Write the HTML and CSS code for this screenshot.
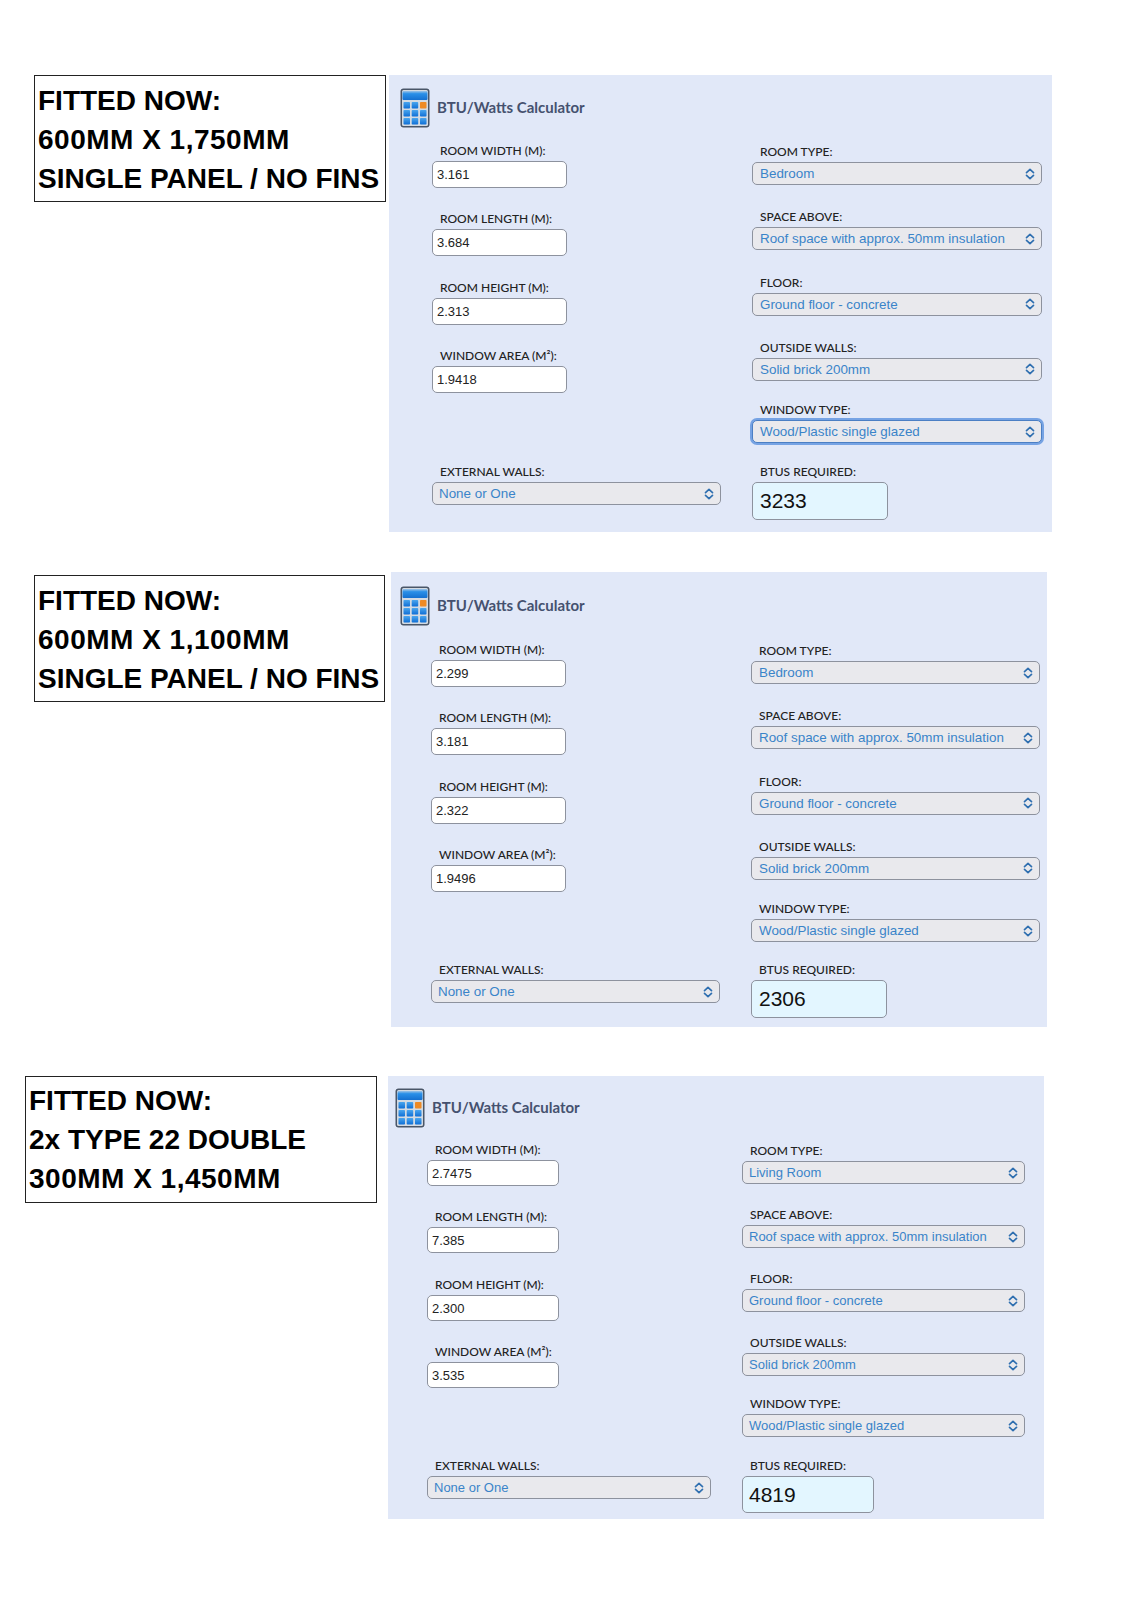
FILE: index.html
```html
<!DOCTYPE html>
<html lang="en">
  <head>
    <meta charset="UTF-8" />
    <meta name="viewport" content="width=device-width, initial-scale=1.0" />
    <title>BTU/Watts Calculator</title>
    <link rel="stylesheet" href="styles.css">
  </head>
  <body>
    <svg class="defs" width="0" height="0">
      <defs>
        <linearGradient id="calc-key" x1="0" y1="0" x2="0" y2="1">
          <stop offset="0" stop-color="#4aa6ee" />
          <stop offset="1" stop-color="#0f6fd6" />
        </linearGradient>
        <linearGradient id="calc-screen" x1="0" y1="0" x2="0" y2="1">
          <stop offset="0" stop-color="#9fc4e6" />
          <stop offset="0.3" stop-color="#2a90e8" />
          <stop offset="1" stop-color="#1570d0" />
        </linearGradient>
        <symbol id="calc" viewBox="0 0 30 40">
          <rect x="0.5" y="0.5" width="29" height="39" rx="3" fill="#4a5668" />
          <rect x="2" y="2" width="26" height="36" rx="1.5" fill="#d3dae2" />
          <rect x="2.5" y="3" width="25" height="9" rx="1" fill="url(#calc-screen)" />
          <rect x="3.5" y="14" width="6.5" height="6.5" rx="0.8" fill="url(#calc-key)" />
          <rect x="11.7" y="14" width="6.5" height="6.5" rx="0.8" fill="url(#calc-key)" />
          <rect x="20" y="14" width="6.5" height="6.5" rx="0.8" fill="#ee8a24" />
          <rect x="3.5" y="22" width="6.5" height="6.5" rx="0.8" fill="url(#calc-key)" />
          <rect x="11.7" y="22" width="6.5" height="6.5" rx="0.8" fill="url(#calc-key)" />
          <rect x="20" y="22" width="6.5" height="6.5" rx="0.8" fill="url(#calc-key)" />
          <rect x="3.5" y="30" width="6.5" height="6.5" rx="0.8" fill="url(#calc-key)" />
          <rect x="11.7" y="30" width="6.5" height="6.5" rx="0.8" fill="url(#calc-key)" />
          <rect x="20" y="30" width="6.5" height="6.5" rx="0.8" fill="url(#calc-key)" />
        </symbol>
        <symbol id="updown" viewBox="0 0 10 12">
          <path d="M1.5 4.6 5 1.4l3.5 3.2M1.5 7.4 5 10.6l3.5-3.2" fill="none" stroke="#2f6fb0" stroke-width="1.7" stroke-linecap="round" stroke-linejoin="round" />
        </symbol>
      </defs>
    </svg>

    <!-- Radiator 1 -->
    <section class="row row-one">
      <div class="note">FITTED NOW:<br><span class="wide">600MM X 1,750MM</span><br>SINGLE PANEL / NO FINS</div>
      <div class="panel">
        <header class="panel-head">
          <svg class="calc-icon"><use href="#calc" /></svg>
          <h2>BTU/Watts Calculator</h2>
        </header>
        <div class="form">
          <div class="col col-inputs">
            <div class="field"><label>ROOM WIDTH (M):</label><div class="input">3.161</div></div>
            <div class="field"><label>ROOM LENGTH (M):</label><div class="input">3.684</div></div>
            <div class="field"><label>ROOM HEIGHT (M):</label><div class="input">2.313</div></div>
            <div class="field"><label>WINDOW AREA (M²):</label><div class="input">1.9418</div></div>
          </div>
          <div class="col col-selects">
            <div class="field"><label>ROOM TYPE:</label><div class="select">Bedroom<svg><use href="#updown" /></svg></div></div>
            <div class="field"><label>SPACE ABOVE:</label><div class="select">Roof space with approx. 50mm insulation<svg><use href="#updown" /></svg></div></div>
            <div class="field"><label>FLOOR:</label><div class="select">Ground floor - concrete<svg><use href="#updown" /></svg></div></div>
            <div class="field"><label>OUTSIDE WALLS:</label><div class="select">Solid brick 200mm<svg><use href="#updown" /></svg></div></div>
            <div class="field field-window"><label>WINDOW TYPE:</label><div class="select focused">Wood/Plastic single glazed<svg><use href="#updown" /></svg></div></div>
          </div>
          <div class="field field-ext"><label>EXTERNAL WALLS:</label><div class="select">None or One<svg><use href="#updown" /></svg></div></div>
          <div class="field field-ext"><label>BTUS REQUIRED:</label><div class="result">3233</div></div>
        </div>
      </div>
    </section>

    <!-- Radiator 2 -->
    <section class="row row-two">
      <div class="note">FITTED NOW:<br><span class="wide">600MM X 1,100MM</span><br>SINGLE PANEL / NO FINS</div>
      <div class="panel">
        <header class="panel-head">
          <svg class="calc-icon"><use href="#calc" /></svg>
          <h2>BTU/Watts Calculator</h2>
        </header>
        <div class="form">
          <div class="col col-inputs">
            <div class="field"><label>ROOM WIDTH (M):</label><div class="input">2.299</div></div>
            <div class="field"><label>ROOM LENGTH (M):</label><div class="input">3.181</div></div>
            <div class="field"><label>ROOM HEIGHT (M):</label><div class="input">2.322</div></div>
            <div class="field"><label>WINDOW AREA (M²):</label><div class="input">1.9496</div></div>
          </div>
          <div class="col col-selects">
            <div class="field"><label>ROOM TYPE:</label><div class="select">Bedroom<svg><use href="#updown" /></svg></div></div>
            <div class="field"><label>SPACE ABOVE:</label><div class="select">Roof space with approx. 50mm insulation<svg><use href="#updown" /></svg></div></div>
            <div class="field"><label>FLOOR:</label><div class="select">Ground floor - concrete<svg><use href="#updown" /></svg></div></div>
            <div class="field"><label>OUTSIDE WALLS:</label><div class="select">Solid brick 200mm<svg><use href="#updown" /></svg></div></div>
            <div class="field field-window"><label>WINDOW TYPE:</label><div class="select">Wood/Plastic single glazed<svg><use href="#updown" /></svg></div></div>
          </div>
          <div class="field field-ext"><label>EXTERNAL WALLS:</label><div class="select">None or One<svg><use href="#updown" /></svg></div></div>
          <div class="field field-ext"><label>BTUS REQUIRED:</label><div class="result">2306</div></div>
        </div>
      </div>
    </section>

    <!-- Radiator 3 -->
    <section class="row row-three">
      <div class="note">FITTED NOW:<br>2x TYPE 22 DOUBLE<br><span class="wide">300MM X 1,450MM</span></div>
      <div class="panel">
        <header class="panel-head">
          <svg class="calc-icon"><use href="#calc" /></svg>
          <h2>BTU/Watts Calculator</h2>
        </header>
        <div class="form">
          <div class="col col-inputs">
            <div class="field"><label>ROOM WIDTH (M):</label><div class="input">2.7475</div></div>
            <div class="field"><label>ROOM LENGTH (M):</label><div class="input">7.385</div></div>
            <div class="field"><label>ROOM HEIGHT (M):</label><div class="input">2.300</div></div>
            <div class="field"><label>WINDOW AREA (M²):</label><div class="input">3.535</div></div>
          </div>
          <div class="col col-selects">
            <div class="field"><label>ROOM TYPE:</label><div class="select">Living Room<svg><use href="#updown" /></svg></div></div>
            <div class="field"><label>SPACE ABOVE:</label><div class="select">Roof space with approx. 50mm insulation<svg><use href="#updown" /></svg></div></div>
            <div class="field"><label>FLOOR:</label><div class="select">Ground floor - concrete<svg><use href="#updown" /></svg></div></div>
            <div class="field"><label>OUTSIDE WALLS:</label><div class="select">Solid brick 200mm<svg><use href="#updown" /></svg></div></div>
            <div class="field field-window"><label>WINDOW TYPE:</label><div class="select">Wood/Plastic single glazed<svg><use href="#updown" /></svg></div></div>
          </div>
          <div class="field field-ext"><label>EXTERNAL WALLS:</label><div class="select">None or One<svg><use href="#updown" /></svg></div></div>
          <div class="field field-ext"><label>BTUS REQUIRED:</label><div class="result">4819</div></div>
        </div>
      </div>
    </section>
  </body>
</html>
```
FILE: styles.css
```css
html,
body {
  margin: 0;
  padding: 0;
  background-color: #fff;
}

body {
  height: 1600px;
  overflow: hidden;
}

.defs {
  display: block;
  height: 0;
}

/* Each row: black note box + calculator panel */
.row {
  display: flex;
  align-items: flex-start;
  --input-w: 135px;
  --input-h: 27px;
  --select-h: 23px;
  --col-gap: 31px;
}

.row-one {
  margin-top: 75px;
  margin-left: 34px;
}

.row-two {
  margin-top: 43px;
  margin-left: 34px;
}

.row-three {
  margin-top: 49px;
  margin-left: 25px;
}

.note {
  box-sizing: border-box;
  width: 352px;
  height: 127px;
  padding: 5px 3px;
  border: 1px solid #222;
  font-family: "Liberation Sans", Arial, sans-serif;
  font-size: 28px;
  font-weight: bold;
  line-height: 39px;
  white-space: nowrap;
  color: #000;
}

.note .wide {
  letter-spacing: 0.5px;
}

.panel {
  box-sizing: border-box;
  width: 663px;
  height: 457px;
  margin-left: 3px;
  padding: 13px 10px 0 43px;
  background-color: #e1e8f8;
  font-family: Lato, "Liberation Sans", sans-serif;
}

.row-two .note {
  width: 351px;
}

.row-two .panel {
  width: 656px;
  height: 455px;
  margin-left: 6px;
  margin-top: -3px;
  padding: 14px 7px 0 40px;
}

.row-three .note {
  padding-top: 4px;
}

.row-three .panel {
  width: 656px;
  height: 443px;
  margin-left: 11px;
  padding: 12px 19px 0 39px;
}

.panel-head {
  display: flex;
  align-items: center;
  height: 40px;
  margin-left: -32px;
}

.row-two .panel-head {
  margin-left: -31px;
}

.calc-icon {
  width: 30px;
  height: 40px;
  flex-shrink: 0;
}

.panel-head h2 {
  margin: -2px 0 0 7px;
  font-size: 15px;
  font-weight: 700;
  color: #45516f;
  white-space: nowrap;
}

.row-one .panel-head h2 {
  margin-top: -3px;
}

.form {
  display: grid;
  grid-template-columns: 289px 1fr;
  column-gap: var(--col-gap);
  margin-top: 15px;
}

.row-two .form {
  margin-top: 16px;
}

.row-three .form {
  margin-top: 14px;
}

.col {
  display: flex;
  flex-direction: column;
  height: 320px;
}

.row-two .col {
  height: 319px;
}

.col-inputs {
  row-gap: 23.4px;
}

.col-selects {
  row-gap: 23.3px;
}

.field label {
  display: block;
  height: 19px;
  padding-left: 8px;
  font-size: 12px;
  font-weight: 500;
  line-height: 17px;
  color: #222;
  white-space: nowrap;
}

.col-inputs .field label {
  height: 18px;
  line-height: 16px;
}

.field-window {
  margin-top: -3px;
}

.input,
.select,
.result {
  box-sizing: border-box;
  font-family: "Liberation Sans", Arial, sans-serif;
  border: 1px solid #8d929e;
}

.input {
  width: var(--input-w);
  height: var(--input-h);
  padding-left: 4px;
  background-color: #fff;
  border-radius: 5px;
  font-size: 13px;
  line-height: 25px;
  color: #222;
}

.select {
  display: flex;
  align-items: center;
  justify-content: space-between;
  height: var(--select-h);
  padding: 0 6px;
  background-color: #e9e9ed;
  border-radius: 5px;
  font-size: 13.4px;
  color: #3a84c9;
  white-space: nowrap;
}

.row-one .col-selects .select,
.row-two .col-selects .select {
  padding-left: 7px;
}

.select svg {
  width: 10px;
  height: 12px;
  flex-shrink: 0;
}

.select.focused {
  border: 1px solid #4b7fc4;
  box-shadow: 0 0 0 2px #76a3e4;
}

.result {
  width: 136px;
  height: 38px;
  padding-left: 7px;
  background-color: #e3f6ff;
  border-radius: 5px;
  font-size: 21px;
  line-height: 36px;
  color: #111;
}

/* Third panel is a slightly smaller crop */
.row-three {
  --input-w: 132px;
  --input-h: 26px;
  --col-gap: 31px;
}

.row-three .form {
  grid-template-columns: 284px 1fr;
}

.row-three .col {
  height: 315px;
}

.row-three .col-inputs {
  row-gap: 23.4px;
}

.row-three .col-selects {
  row-gap: 22px;
}

.row-three .select {
  font-size: 13px;
}

.row-three .result {
  width: 132px;
  height: 37px;
  padding-left: 6px;
  line-height: 35px;
}
```
